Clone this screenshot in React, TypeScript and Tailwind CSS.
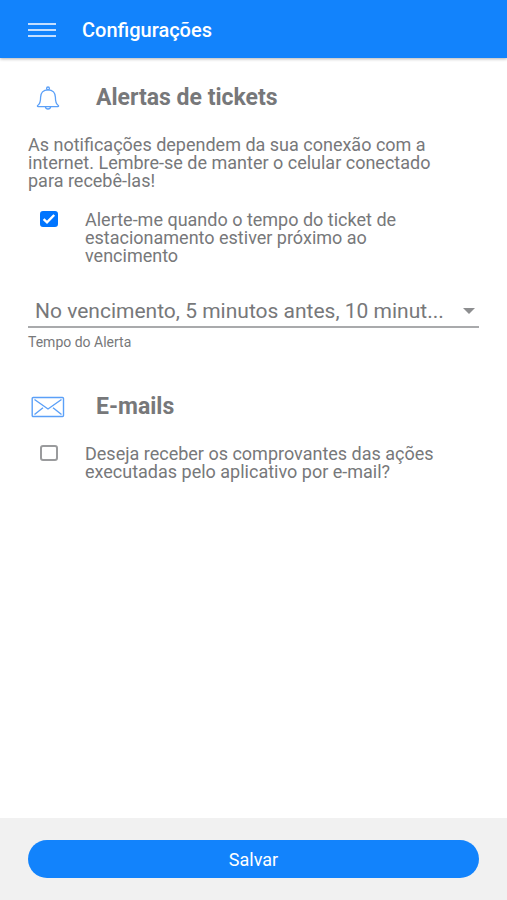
import React, { useState } from 'react';

interface AlertCheckboxProps {
  id: string;
  checked: boolean;
  onChange: (value: boolean) => void;
  children: React.ReactNode;
}

const AlertCheckbox: React.FC<AlertCheckboxProps> = ({ id, checked, onChange, children }) => (
  <div className="flex items-start">
    <span className="relative mr-[27px] ml-3 h-4 w-[18px] shrink-0">
      <input
        id={id}
        type="checkbox"
        checked={checked}
        onChange={(e) => onChange(e.target.checked)}
        className="block h-4 w-[18px] appearance-none rounded-[3px] border-2 border-[#9a9b9d] bg-white checked:border-[#0075ff] checked:bg-[#0075ff]"
      />
      {checked && (
        <svg viewBox="0 0 18 16" className="pointer-events-none absolute inset-0 h-4 w-[18px]" fill="none" stroke="#fff" strokeWidth="2.4">
          <path d="M3.6 8.2 7 11.4 14.2 4" />
        </svg>
      )}
    </span>
    <label htmlFor={id} className="text-[18px] leading-[18px]">
      {children}
    </label>
  </div>
);

const BellIcon = () => (
  <svg viewBox="0 0 24 24" className="h-6 w-6 shrink-0" fill="none" stroke="#5ba0f8" strokeWidth="1.3" strokeLinejoin="round">
    <circle cx="12" cy="2.4" r="1.4" />
    <path d="M12 3.8c-4.8 0-7.4 3.1-7.4 7.4 0 4.2-.6 6.700-2.700 8.100-.8.5-.6 1.300.3 1.300h19.600c.9 0 1.100-.8.300-1.300-2.100-1.400-2.700-3.900-2.700-8.100 0-4.300-2.600-7.400-7.400-7.400Z" />
    <path d="M9.4 20.8c.3 1.5 1.2 2.2 2.6 2.2s2.300-.7 2.600-2.200" />
  </svg>
);

const MailIcon = () => (
  <svg viewBox="0 0 34 22" className="h-[22px] w-[34px] shrink-0" fill="none" stroke="#5ba0f8" strokeWidth="1.4">
    <rect x="1.2" y="1.5" width="31.3" height="19" rx="1" />
    <path d="M3.5 3.500 17 13 30.500 3.500M3.500 18.500 12 11.800M30.500 18.500 22 11.800" />
  </svg>
);

export default function App() {
  const [ticketAlert, setTicketAlert] = useState(true);
  const [emailReceipts, setEmailReceipts] = useState(false);

  return (
    <div className="flex min-h-screen flex-col bg-white font-[Roboto,sans-serif] text-[#77787a]">
      <header className="flex h-[58px] items-center bg-[#1283fc] px-7 pt-px text-white shadow-[0_1px_3px_rgba(0,0,0,0.3)]">
        <button type="button" aria-label="Menu" className="mr-[26px]">
          <svg viewBox="0 0 28 16" className="h-4 w-7" fill="none" stroke="#c4dfff" strokeWidth="2">
            <path d="M0 2h28M0 8h28M0 14h28" />
          </svg>
        </button>
        <h1 className="text-[20px] leading-6 font-medium">Configurações</h1>
      </header>

      <main className="flex-1 px-7 pt-7">
        <section>
          <div className="flex items-center">
            <div className="mr-7 flex w-10 justify-center">
              <BellIcon />
            </div>
            <h2 className="text-[23px] leading-6 font-bold">Alertas de tickets</h2>
          </div>
          <p className="mt-[26px] text-[18px] leading-[18px]">
            As notificações dependem da sua conexão com a<br />
            internet. Lembre-se de manter o celular conectado<br />
            para recebê-las!
          </p>
          <div className="mt-[21px]">
            <AlertCheckbox id="ticket-alert" checked={ticketAlert} onChange={setTicketAlert}>
              Alerte-me quando o tempo do ticket de<br />
              estacionamento estiver próximo ao<br />
              vencimento
            </AlertCheckbox>
          </div>

          {/* Alert time */}
          <div className="mt-[31px]">
            <div className="relative">
              <select
                id="alert-time"
                className="h-8 w-full appearance-none overflow-hidden border-b-2 border-[#a9aaac] bg-transparent pr-6 pl-[7px] text-[21px] text-ellipsis whitespace-nowrap outline-none"
              >
                <option>No vencimento, 5 minutos antes, 10 minut...</option>
              </select>
              <svg viewBox="0 0 12 6" className="pointer-events-none absolute top-3 right-1 h-[6px] w-3" fill="#8d8e90">
                <path d="M0 0h12L6 6Z" />
              </svg>
            </div>
            <label htmlFor="alert-time" className="mt-[6px] block text-[14px] leading-4">
              Tempo do Alerta
            </label>
          </div>
        </section>

        <section className="mt-[45px]">
          <div className="flex items-center">
            <div className="mr-7 flex w-10 justify-center">
              <MailIcon />
            </div>
            <h2 className="text-[23px] leading-6 font-bold">E-mails</h2>
          </div>
          <div className="mt-[26px]">
            <AlertCheckbox id="email-receipts" checked={emailReceipts} onChange={setEmailReceipts}>
              Deseja receber os comprovantes das ações<br />
              executadas pelo aplicativo por e-mail?
            </AlertCheckbox>
          </div>
        </section>
      </main>

      <footer className="bg-[#f1f1f1] px-7 py-[22px]">
        <button type="button" className="block h-[38px] w-full rounded-full bg-[#1283fc] text-[18px] text-white">
          Salvar
        </button>
      </footer>
    </div>
  );
}
